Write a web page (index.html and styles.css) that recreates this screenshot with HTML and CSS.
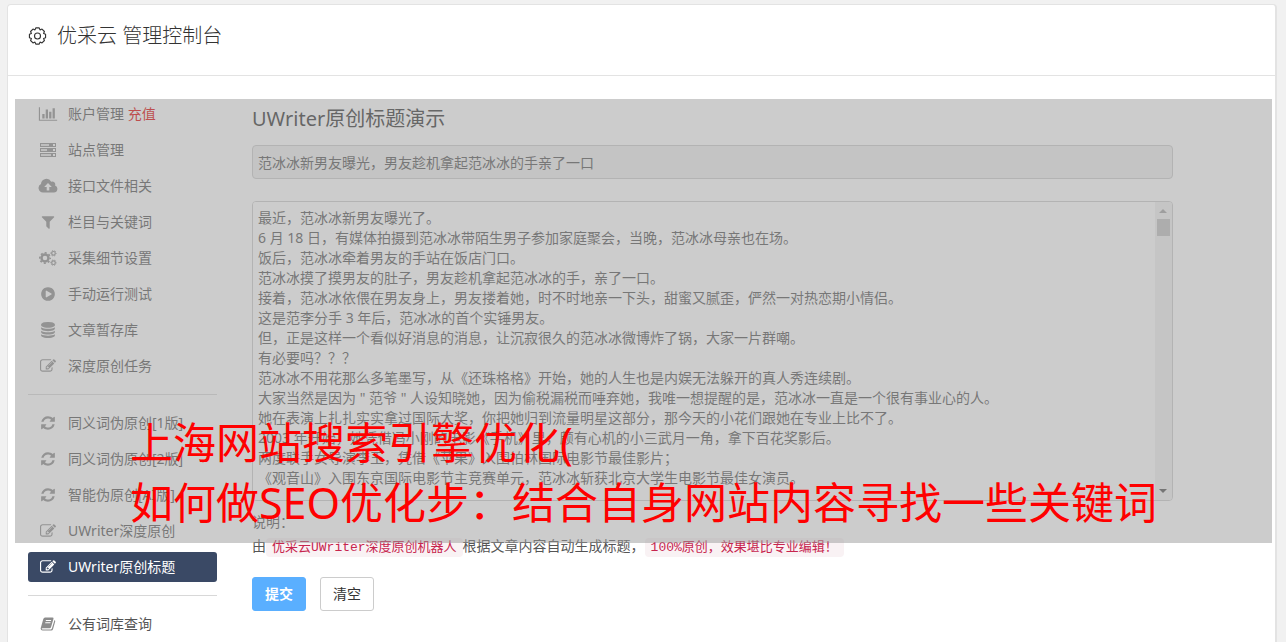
FILE: index.html
```html
<!DOCTYPE html>
<html lang="zh-CN">
<head>
  <meta charset="UTF-8" />
  <meta name="viewport" content="width=device-width, initial-scale=1.0" />
  <title>优采云 管理控制台</title>
  <link rel="stylesheet" href="styles.css">
</head>
<body>

  <!-- ───── icon sprite ───── -->
  <svg class="sprite" aria-hidden="true">
    <symbol id="i-gear" viewBox="0 0 24 24">
      <path fill="none" stroke="currentColor" stroke-width="1.5" stroke-linejoin="round" d="M22.76 9.71V14.29L20.13 15.37 21.23 17.99 17.99 21.23 15.37 20.13 14.29 22.76H9.71L8.63 20.13 6.01 21.23 2.77 17.99 3.87 15.37 1.24 14.29V9.71L3.87 8.63 2.77 6.01 6.01 2.77 8.63 3.87 9.71 1.24H14.29L15.37 3.87 17.99 2.77 21.23 6.01 20.13 8.63Z"/>
      <circle cx="12" cy="12" r="4" fill="none" stroke="currentColor" stroke-width="1.5"/>
    </symbol>
    <symbol id="i-chart" viewBox="0 0 2048 1792">
      <path d="M640 896v512h-256v-512h256zm384-512v1024h-256v-1024h256zm1024 1152v128h-2048v-1536h128v1408h1920zm-640-896v768h-256v-768h256zm384-384v1152h-256v-1152h256z"/>
    </symbol>
    <symbol id="i-server" viewBox="0 0 18 16">
      <path fill-rule="evenodd" d="M1 1h16v4H1zM2 2.300v1.400h8V2.300zM14 2v2h2v-2zM1 6h16v4H1zM2 7.300v1.400h6V7.300zM14 7v2h2v-2zM1 11h16v4H1zM2 12.300v1.400h10v-1.400zM14 12v2h2v-2z"/>
    </symbol>
    <symbol id="i-cloud" viewBox="0 0 20 16">
      <path fill-rule="evenodd" d="M5 14.500a4.500 4.500 0 0 1-2-8.500 5.400 5.400 0 0 1 10.200-2.200 2.900 2.900 0 0 1 3.900 3.600A3.700 3.700 0 0 1 16 14.500zM10 5L6.200 9h2.500v3.500h2.600V9h2.500z"/>
    </symbol>
    <symbol id="i-filter" viewBox="0 0 1792 1792">
      <path d="M1595 295q17 41-14 70l-493 493v742q0 42-39 59-13 5-25 5-27 0-45-19l-256-256q-19-19-19-45v-486l-493-493q-31-29-14-70 17-39 59-39h1280q42 0 59 39z"/>
    </symbol>
    <symbol id="i-cogs" viewBox="0 0 18 16">
      <g fill="none" stroke="currentColor">
        <circle cx="6" cy="8" r="3.500" stroke-width="2.400"/>
        <circle cx="6" cy="8" r="5.200" stroke-width="1.600" stroke-dasharray="2.040 2.044" stroke-dashoffset="1"/>
        <circle cx="14.500" cy="3.300" r="1.800" stroke-width="1.200"/>
        <circle cx="14.500" cy="3.300" r="2.700" stroke-width="1" stroke-dasharray="1.400 1.427" stroke-dashoffset=".7"/>
        <circle cx="14.500" cy="12.700" r="1.800" stroke-width="1.200"/>
        <circle cx="14.500" cy="12.700" r="2.700" stroke-width="1" stroke-dasharray="1.400 1.427" stroke-dashoffset=".7"/>
      </g>
    </symbol>
    <symbol id="i-play" viewBox="0 0 1792 1792">
      <path d="M896 128q209 0 385.500 103t279.500 279.500 103 385.500-103 385.500-279.500 279.500-385.500 103-385.500-103-279.500-279.500-103-385.500 103-385.500 279.500-279.500 385.500-103zm384 823q32-18 32-55t-32-55l-544-320q-31-19-64-1-32 19-32 56v640q0 37 32 56 16 8 32 8 17 0 32-9z"/>
    </symbol>
    <symbol id="i-database" viewBox="0 0 1792 1792">
      <path d="M896 768q237 0 443-43t325-127v170q0 69-103 128t-280 93.500-385 34.500-385-34.500-280-93.500-103-128v-170q119 84 325 127t443 43zm0 768q237 0 443-43t325-127v170q0 69-103 128t-280 93.500-385 34.500-385-34.500-280-93.500-103-128v-170q119 84 325 127t443 43zm0-384q237 0 443-43t325-127v170q0 69-103 128t-280 93.500-385 34.500-385-34.500-280-93.500-103-128v-170q119 84 325 127t443 43zm0-1152q208 0 385 34.500t280 93.500 103 128v128q0 69-103 128t-280 93.500-385 34.500-385-34.500-280-93.500-103-128v-128q0-69 103-128t280-93.500 385-34.500z"/>
    </symbol>
    <symbol id="i-edit" viewBox="0 0 1792 1792">
      <path d="M888 1184l116-116-152-152-116 116v56h96v96h56zm440-720q-16-16-33 1l-350 350q-17 17-1 33t33-1l350-350q17-17 1-33zm80 594v190q0 119-84.500 203.500t-203.500 84.500h-832q-119 0-203.500-84.500t-84.500-203.500v-832q0-119 84.500-203.500t203.500-84.500h832q63 0 117 25 15 7 18 23 3 17-9 29l-49 49q-14 14-32 8-23-6-45-6h-832q-66 0-113 47t-47 113v832q0 66 47 113t113 47h832q66 0 113-47t47-113v-126q0-13 9-22l64-64q15-15 35-7t20 29zm-96-738l288 288-672 672h-288v-288zm444 132l-92 92-288-288 92-92q28-28 68-28t68 28l152 152q28 28 28 68t-28 68z"/>
    </symbol>
    <symbol id="i-refresh" viewBox="0 0 1792 1792">
      <path d="M1639 1056q0 5-1 7-64 268-268 434.500t-478 166.500q-146 0-282.500-55t-243.500-157l-129 129q-19 19-45 19t-45-19-19-45v-448q0-26 19-45t45-19h448q26 0 45 19t19 45-19 45l-137 137q71 66 161 102t187 36q134 0 250-65t186-179q11-17 53-117 8-23 30-23h192q13 0 22.500 9.500t9.500 22.500zm25-800v448q0 26-19 45t-45 19h-448q-26 0-45-19t-19-45 19-45l138-138q-148-137-349-137-134 0-250 65t-186 179q-11 17-53 117-8 23-30 23h-199q-13 0-22.500-9.500t-9.500-22.500v-7q65-268 270-434.500t480-166.500q146 0 284 55.500t245 156.500l130-129q19-19 45-19t45 19 19 45z"/>
    </symbol>
    <symbol id="i-book" viewBox="0 0 16 16">
      <path fill-rule="evenodd" d="M5 1.500h7.500q1.300 0 1 1.300L11 11.200q-.3 1-1.400 1H2.500q-.8 0-.8.500 0 .7 1 .7h8.200q.8 0 1-.8L14.500 4q1 .5.700 1.500L13 13.300q-.4 1.300-1.700 1.300H2.600Q.7 14.500.6 12.500L3.300 3Q3.800 1.500 5 1.500zM6 4l-.3 1h5.200l.3-1zM5.400 6.200l-.3 1h5.200l.3-1z"/>
    </symbol>
  </svg>

  <div class="card">
    <header class="card-header">
      <h1><svg class="icon-gear"><use href="#i-gear"/></svg>优采云 管理控制台</h1>
    </header>

    <div class="card-body">
      <!-- ───── sidebar ───── -->
      <nav class="sidebar">
        <a href="#"><svg><use href="#i-chart"/></svg><span>账户管理 <em>充值</em></span></a>
        <a href="#"><svg><use href="#i-server"/></svg>站点管理</a>
        <a href="#"><svg><use href="#i-cloud"/></svg>接口文件相关</a>
        <a href="#"><svg><use href="#i-filter"/></svg>栏目与关键词</a>
        <a href="#"><svg><use href="#i-cogs"/></svg>采集细节设置</a>
        <a href="#"><svg><use href="#i-play"/></svg>手动运行测试</a>
        <a href="#"><svg><use href="#i-database"/></svg>文章暂存库</a>
        <a href="#"><svg><use href="#i-edit"/></svg>深度原创任务</a>
        <hr>
        <a href="#"><svg><use href="#i-refresh"/></svg>同义词伪原创[1版]</a>
        <a href="#"><svg><use href="#i-refresh"/></svg>同义词伪原创[2版]</a>
        <a href="#"><svg><use href="#i-refresh"/></svg>智能伪原创[AI版]</a>
        <a href="#"><svg><use href="#i-edit"/></svg>UWriter深度原创</a>
        <a href="#" class="active" aria-current="page"><svg><use href="#i-edit"/></svg>UWriter原创标题</a>
        <hr>
        <a href="#"><svg><use href="#i-book"/></svg>公有词库查询</a>
      </nav>

      <!-- ───── title demo form ───── -->
      <main class="content">
        <h2>UWriter原创标题演示</h2>
        <form>
          <input type="text" class="title-input" aria-label="标题" readonly value="范冰冰新男友曝光，男友趁机拿起范冰冰的手亲了一口">

          <div class="article">
            <textarea aria-label="文章内容">最近，范冰冰新男友曝光了。
6 月 18 日，有媒体拍摄到范冰冰带陌生男子参加家庭聚会，当晚，范冰冰母亲也在场。
饭后，范冰冰牵着男友的手站在饭店门口。
范冰冰摸了摸男友的肚子，男友趁机拿起范冰冰的手，亲了一口。
接着，范冰冰依偎在男友身上，男友搂着她，时不时地亲一下头，甜蜜又腻歪，俨然一对热恋期小情侣。
这是范李分手 3 年后，范冰冰的首个实锤男友。
但，正是这样一个看似好消息的消息，让沉寂很久的范冰冰微博炸了锅，大家一片群嘲。
有必要吗？？？
范冰冰不用花那么多笔墨写，从《还珠格格》开始，她的人生也是内娱无法躲开的真人秀连续剧。
大家当然是因为 " 范爷 " 人设知晓她，因为偷税漏税而唾弃她，我唯一想提醒的是，范冰冰一直是一个很有事业心的人。
她在表演上扎扎实实拿过国际大奖，你把她归到流量明星这部分，那今天的小花们跟她在专业上比不了。
2003 年开始，她凭借冯小刚的电影《手机》里，颇有心机的小三武月一角，拿下百花奖影后。
两度联手女导演李玉，凭借《苹果》入围柏林国际电影节最佳影片；
《观音山》入围东京国际电影节主竞赛单元，范冰冰斩获北京大学生电影节最佳女演员。</textarea>
            <div class="scrollbar" aria-hidden="true">
              <i class="arrow-up"></i>
              <i class="thumb"></i>
              <i class="arrow-down"></i>
            </div>
          </div>

          <p class="note">说明：<br>由<code>优采云UWriter深度原创机器人</code>根据文章内容自动生成标题，<code>100%原创，效果堪比专业编辑！</code></p>

          <div class="actions">
            <button type="submit" class="btn btn-primary">提交</button>
            <button type="reset" class="btn">清空</button>
          </div>
        </form>
      </main>
    </div>

    <!-- ───── caption over the page ───── -->
    <div class="caption">
      <p>上海网站搜索引擎优化(<br>如何做SEO优化步：结合自身网站内容寻找一些关键词</p>
    </div>
  </div>

</body>
</html>
```

FILE: styles.css
```css
:root {
  --c-text:    #555555;
  --c-heading: #333333;
  --c-icon:    #8c8c8c;
  --c-border:  #cccccc;
  --c-line:    #e3e3e3;
  --c-active:  #3a4965;
  --c-primary: #5aafff;

  --font-base: "Noto Sans", "Noto Sans CJK SC", sans-serif;
}

* { box-sizing: border-box; }

/* ───── base layout ───── */
body {
  margin: 0;
  padding: 4px 9px 0 7px;
  background: #f1f1f1;
  color: var(--c-text);
  font: 400 14px/20px var(--font-base);
  overflow: hidden;
}

.sprite {
  position: absolute;
  width: 0;
  height: 0;
}

.card {
  position: relative;
  background: #fff;
  border: 1px solid var(--c-line);
  border-right-width: 2px;
  border-radius: 4px;
}

.card-header {
  padding: 16px 20px 24px;
  border-bottom: 1px solid var(--c-line);
}
.card-header h1 {
  display: flex;
  align-items: center;
  gap: 10px;
  margin: 0;
  color: var(--c-heading);
  font-size: 20px;
  font-weight: 300;
  line-height: 30px;
}
.icon-gear {
  width: 19px;
  height: 18px;
}

.card-body {
  display: flex;
  gap: 35px;
  padding: 23px 0 20px 20px;
}

/* ───── sidebar ───── */
.sidebar {
  display: flex;
  flex: 0 0 189px;
  flex-direction: column;
  gap: 6px;
}
.sidebar a {
  display: flex;
  align-items: center;
  gap: 10px;
  height: 30px;
  padding: 0 10px;
  border-radius: 3px;
  color: var(--c-text);
  text-decoration: none;
}
.sidebar svg {
  width: 20px;
  height: 16px;
  color: var(--c-icon);
  fill: currentColor;
}
.sidebar em {
  color: #e00000;
  font-style: normal;
}
.sidebar .active,
.sidebar .active svg {
  background: var(--c-active);
  color: #fff;
}
.sidebar hr {
  width: 100%;
  margin: 7px 0;
  border: 0;
  border-top: 1px solid #d8d8d8;
}

/* ───── form ───── */
.content {
  flex: 1;
  min-width: 0;
}
.content h2 {
  margin: 0 0 6px;
  color: var(--c-heading);
  font-size: 20px;
  font-weight: 400;
  line-height: 40px;
}
.content form { width: 90%; }

.title-input {
  display: block;
  width: 100%;
  height: 34px;
  margin-bottom: 22px;
  padding: 6px 5px;
  border: 1px solid var(--c-border);
  border-radius: 4px;
  background: #eee;
  color: var(--c-text);
  font: inherit;
}

.article {
  display: flex;
  border: 1px solid var(--c-border);
  border-radius: 4px;
  overflow: hidden;
}
.article textarea {
  flex: 1;
  height: 298px;
  padding: 6px 5px;
  border: 0;
  background: #fff;
  color: var(--c-text);
  font: inherit;
  resize: none;
  overflow: hidden;
}

.scrollbar {
  display: flex;
  flex-direction: column;
  align-items: center;
  width: 17px;
  padding: 7px 0;
  background: #f1f1f1;
}
.arrow-up,
.arrow-down {
  border: 4px solid transparent;
}
.arrow-up {
  border-top: 0;
  border-bottom-color: #a3a3a3;
}
.arrow-down {
  margin-top: auto;
  border-top-color: #505050;
  border-bottom: 0;
}
.thumb {
  width: 13px;
  height: 17px;
  margin-top: 6px;
  background: #c1c1c1;
}

.note {
  margin: 9px 0 19px;
  line-height: 24px;
}
.note code {
  padding: 2px 6px;
  border-radius: 4px;
  background: #f9f2f4;
  color: #c7254e;
  font: 13px "Liberation Mono", "Noto Sans CJK SC", monospace;
}

/* ───── buttons ───── */
.actions {
  display: flex;
  gap: 14px;
}
.btn {
  height: 34px;
  padding: 0 12px;
  border: 1px solid var(--c-border);
  border-radius: 3px;
  background: #fff;
  color: var(--c-heading);
  font: inherit;
  cursor: pointer;
}
.btn-primary {
  border-color: var(--c-primary);
  background: var(--c-primary);
  color: #fff;
  font-weight: 600;
}

/* ───── caption ───── */
.caption {
  position: absolute;
  top: 94px;
  right: 3px;
  left: 7px;
  padding: 314px 0 10px 115px;
  background: rgba(153, 153, 153, 0.5);
  pointer-events: none;
}
.caption p {
  margin: 0;
  color: #f00;
  font-size: 43px;
  font-weight: 400;
  line-height: 60px;
  white-space: nowrap;
}
```
